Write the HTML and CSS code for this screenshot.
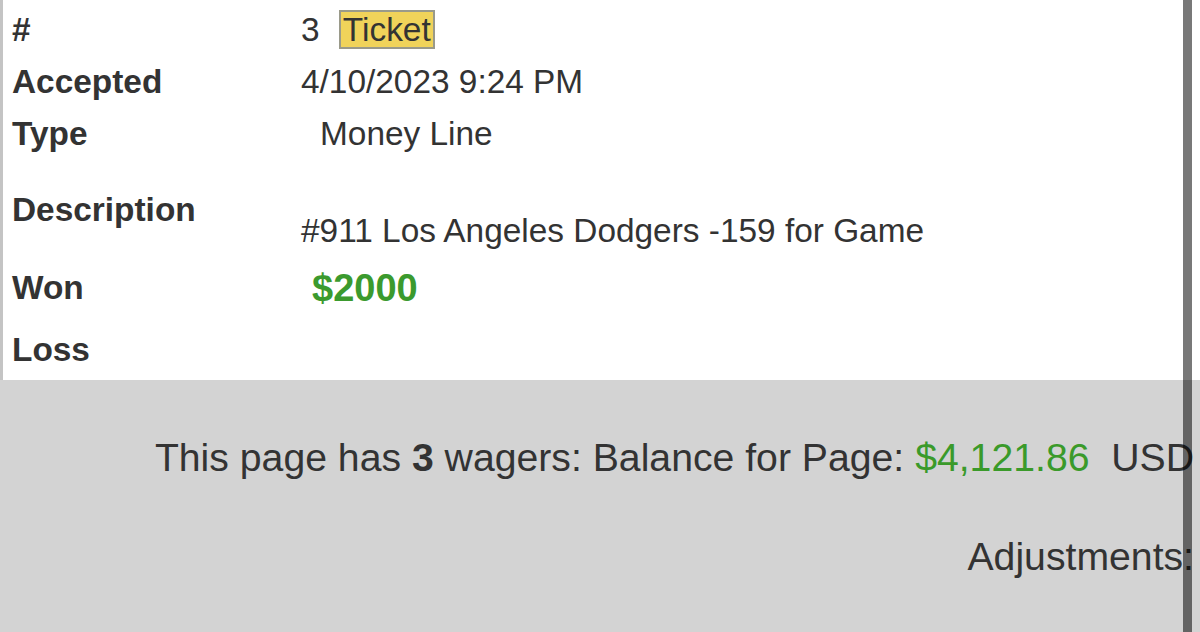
FILE: index.html
```html
<!DOCTYPE html>
<html lang="en">
<head>
    <meta charset="utf-8" />
    <title>Wager Details</title>
    <link rel="stylesheet" href="styles.css">
</head>
<body>
    <div class="page">
        <div class="ticket">
            <div class="row">
                <span class="label">#</span>
                <span class="value">3 <span class="badge">Ticket</span></span>
            </div>
            <div class="row">
                <span class="label">Accepted</span>
                <span class="value">4/10/2023 9:24 PM</span>
            </div>
            <div class="row">
                <span class="label">Type</span>
                <span class="value type">Money Line</span>
            </div>
            <div class="row desc">
                <span class="label">Description</span>
                <span class="value">#911 Los Angeles Dodgers -159 for Game</span>
            </div>
            <div class="row won">
                <span class="label">Won</span>
                <span class="value amount">$2000</span>
            </div>
            <div class="row loss">
                <span class="label">Loss</span>
                <span class="value"></span>
            </div>
        </div>
        <div class="summary">
            <p>This page has <b>3</b> wagers: Balance for Page: <span class="money">$4,121.86</span>&nbsp; USD</p>
            <p class="adjust">Adjustments:</p>
        </div>
        <div class="scrollbar"></div>
    </div>
</body>
</html>
```
FILE: styles.css
```css
html, body{
    margin: 0;
    height: 100%;
    background: #d3d3d3;
}
body{
    font-family: "Liberation Sans", Arial, sans-serif;
    color: #333;
    overflow: hidden;
}
.page{
    position: relative;
    height: 632px;
}
.ticket{
    background: #fff;
    border-left: 3px solid #c4c4c4;
    height: 380px;
    box-sizing: border-box;
    padding-top: 4px;
}
.row{
    display: grid;
    grid-template-columns: 289px 1fr;
    padding-left: 9px;
    height: 52px;
    line-height: 52px;
    font-size: 33.4px;
}
.label{
    font-weight: bold;
}
.badge{
    display: inline-block;
    margin-left: 10px;
    padding: 0 2px;
    line-height: 35px;
    background: #f0d35a;
    border: 2px solid #9a9a8a;
}
.type{
    padding-left: 19px;
}
.row.desc{
    height: 97px;
}
.desc .label{
    align-self: start;
    margin-top: 24px;
    line-height: 52px;
}
.desc .value{
    align-self: end;
}
.row.won{
    margin-top: 5px;
}
.amount{
    padding-left: 11px;
    font-size: 38px;
    font-weight: bold;
    color: #3b9a2e;
}
.row.loss{
    margin-top: 10px;
}
.summary{
    padding: 52px 6px 0 0;
    text-align: right;
    font-size: 39.2px;
    line-height: 52px;
    white-space: nowrap;
}
.summary p{
    margin: 0;
}
.summary .adjust{
    margin-top: 47px;
}
.money{
    color: #3a9a2a;
}
.scrollbar{
    position: absolute;
    top: 0;
    bottom: 0;
    left: 1183px;
    width: 9px;
    background: rgba(0, 0, 0, 0.53);
}
```
